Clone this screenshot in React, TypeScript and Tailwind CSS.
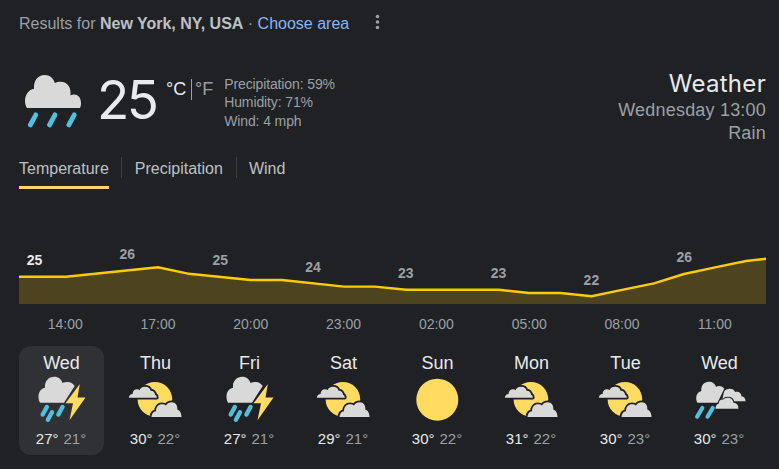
import type { ReactNode } from "react";

type IconName = "storm" | "partly" | "sunny" | "showers";

const days: { name: string; icon: IconName; high: number; low: number }[] = [
  { name: "Wed", icon: "storm", high: 27, low: 21 },
  { name: "Thu", icon: "partly", high: 30, low: 22 },
  { name: "Fri", icon: "storm", high: 27, low: 21 },
  { name: "Sat", icon: "partly", high: 29, low: 21 },
  { name: "Sun", icon: "sunny", high: 30, low: 22 },
  { name: "Mon", icon: "partly", high: 31, low: 22 },
  { name: "Tue", icon: "partly", high: 30, low: 23 },
  { name: "Wed", icon: "showers", high: 30, low: 23 },
];

const line =
  "0,36.8 47,36.8 139,27.3 170,33.8 231.5,40 263,40 325,46.6 356,46.6 387,49.8 480,49.8 510,53 541.5,53 572.5,56.2 603,49.8 635,43.4 665,34 696,27.3 727,21 747,18.8";

const temps = [
  { x: 15.5, y: 25, value: 25 },
  { x: 108.3, y: 19, value: 26 },
  { x: 201.2, y: 25, value: 25 },
  { x: 294, y: 32, value: 24 },
  { x: 386.8, y: 38, value: 23 },
  { x: 479.6, y: 38, value: 23 },
  { x: 572.4, y: 45, value: 22 },
  { x: 665.2, y: 22, value: 26 },
];

const hours = ["14:00", "17:00", "20:00", "23:00", "02:00", "05:00", "08:00", "11:00"];

function RainIcon() {
  return (
    <svg width="64" height="64" viewBox="0 0 64 64">
      <path
        d="M6 38 C4.7 36 4 33.500 4 31 C4 24.500 8 19.500 13 18.700 C12.500 10.500 17 5 23.500 5 C29 5 32.500 8.500 33.800 13 C35.500 12 37.500 11.700 39.500 11.700 C45.500 11.700 49.500 16 49.500 22 L49.500 25.400 C50.500 24.700 52 24.400 53.300 24.400 C57.500 24.400 60 28 60 33 C60 35 59.700 36.500 59 38 Z"
        fill="#d9d9d9"
      />
      <g stroke="#4fc0de" strokeWidth="4.800" strokeLinecap="round">
        <path d="M14.800 44.800 9.300 55" />
        <path d="M34 44.800 28.500 55" />
        <path d="M53.300 44.800 47.800 55" />
      </g>
    </svg>
  );
}

const icons: Record<IconName, ReactNode> = {
  storm: (
    <>
      <path
        d="M9 26.700 C8 25 7.500 23 7.500 20.800 C7.500 16 10 12.700 14 11.800 C13.300 5.500 17.500 .8 23.200 .8 C27.500 .8 30.500 3.500 31.500 7 C33 6.300 35 6 36.800 6 C40 6 42.300 7.700 43.700 10 L33 26.700 Z"
        fill="#d9d9d9"
      />
      <path d="M48.800 8 34.500 27.300H42L38.500 44.300 54.500 21.500H46.500Z" fill="#ffdc60" />
      <g stroke="#4fc0de" strokeWidth="4.400" strokeLinecap="round">
        <path d="M15.800 31 11.700 38.500" />
        <path d="M21 36.300 16.900 43.800" />
        <path d="M31.500 31 27.400 38.500" />
      </g>
    </>
  ),
  partly: (
    <>
      <circle cx="29.900" cy="23.300" r="17.300" fill="#ffdc60" />
      <path
        d="M3.800 21.700 C4.300 19 5.800 18 7.600 18 C7.600 15 9.400 13.200 12 13.200 C13 13.200 14 13.500 14.700 14 C15.600 11.800 17.500 10.700 20 10.700 C23 10.700 25 12.200 25.600 14.700 C28 14.300 30 16.500 30 18.700 C31.300 19 31.800 20.200 31.800 21.700 Z"
        fill="#d9d9d9"
        stroke="#202124"
        strokeWidth="3.600"
        strokeLinejoin="round"
        paintOrder="stroke"
      />
      <path
        d="M26.500 41 C26.500 38 28 35.500 31 35.200 C31 31 33.500 28.300 37 28.300 C38.800 28.300 40 28.600 41 29.500 C42.300 27.300 44.300 26.300 46.700 26.300 C50.500 26.300 52.800 29.500 52.300 33.500 C55 34.300 56.500 37.500 56.500 41 Z"
        fill="#d9d9d9"
        stroke="#202124"
        strokeWidth="3.600"
        strokeLinejoin="round"
        paintOrder="stroke"
      />
    </>
  ),
  sunny: <circle cx="30.300" cy="23.700" r="21" fill="#ffdc60" />,
  showers: (
    <>
      <path
        d="M33 25.300 L35 15.500 C36.200 13.700 38.300 12.700 40.700 12.700 C43.300 12.700 45.300 13.900 46.200 16 C49.500 14.800 52.300 16.800 52.500 20.200 C55 20.400 56.600 22.300 56.500 25.300 Z"
        fill="#d9d9d9"
      />
      <path
        d="M8.500 26.700 C7.600 25.500 7.200 24 7.200 22 C7.200 18.500 9 15.800 12.300 15 C11.800 9.500 15 5.700 19.800 5.700 C23.500 5.700 26.200 7.800 27 10.800 C30 9.200 33.500 10 35.300 12.500 L28.500 26.700 Z"
        fill="#d9d9d9"
        stroke="#202124"
        strokeWidth="1.800"
        paintOrder="stroke"
      />
      <path
        d="M26.500 32.700 C26.500 30 27.800 28 29.800 27.500 C29.800 24.800 31.700 23.200 34.300 23.600 C35.200 22.400 36.800 21.700 38.800 21.700 C42 21.700 44.200 23.700 44.400 26.700 C47.500 26.700 49.600 29 49.400 32.700 Z"
        fill="#d9d9d9"
        stroke="#202124"
        strokeWidth="2"
        strokeLinejoin="round"
        paintOrder="stroke"
      />
      <g stroke="#4fc0de" strokeWidth="4.200" strokeLinecap="round">
        <path d="M13.300 32 8.100 40.800" />
        <path d="M23.700 32 18.500 40.800" />
      </g>
    </>
  ),
};

export default function App() {
  return (
    <main className="h-[469px] w-[779px] overflow-hidden bg-[#202124] pl-[19px] pr-[13px] pt-3 font-['Liberation_Sans',Arial,sans-serif] text-[#bdc1c6]">
      <header className="flex h-[23px] items-center text-base">
        <p className="whitespace-pre">
          <span className="text-[#9aa0a6]">Results for </span>
          <b>New York, NY, USA</b>
          <span className="text-[#9aa0a6]"> · </span>
          <span className="text-[#8ab4f8]">Choose area</span>
        </p>
        <svg className="ml-[26px] -mt-[3px]" width="5" height="16" fill="#9aa0a6">
          <circle cx="2.500" cy="2.500" r="1.800" />
          <circle cx="2.500" cy="8" r="1.800" />
          <circle cx="2.500" cy="13.500" r="1.800" />
        </svg>
      </header>

      <section className="mt-[35px] flex h-[78px]">
        <div className="ml-[2px] w-16">
          <RainIcon />
        </div>
        <div className="ml-[12px] w-[69px] font-[Inter] text-[53px] leading-[61px] tracking-[-2.5px] text-[#e8eaed]">25</div>
        <div className="mt-[9px] flex h-[21px] text-lg leading-[21px]">
          <span className="w-[25px] text-[#e8eaed]">°C</span>
          <span className="border-l border-[#9aa0a6] pl-[3px] text-[#9aa0a6]">°F</span>
        </div>
        <div className="ml-[11px] mt-[5px] text-sm leading-[18.3px] tracking-[-0.12px] text-[#9aa0a6]">
          <p>Precipitation: 59%</p>
          <p>Humidity: 71%</p>
          <p>Wind: 4 mph</p>
        </div>
        <div className="ml-auto text-right text-lg leading-[23px] tracking-[0.2px] text-[#9aa0a6]">
          <h1 className="h-[29px] font-[Inter] text-2xl leading-7 tracking-[0.3px] text-[#e8eaed]">Weather</h1>
          <p>Wednesday 13:00</p>
          <p>Rain</p>
        </div>
      </section>

      <nav className="mt-[9px] flex h-8 text-base leading-[23px]">
        <span className="border-b-[3px] border-[#fdd663]">Temperature</span>
        <span className="ml-3 h-[21px] border-l border-[#3c4043] pl-[13px]">Precipitation</span>
        <span className="ml-[13px] h-[21px] border-l border-[#3c4043] pl-3">Wind</span>
      </nav>

      <svg className="mt-[51px] block" width="747" height="96" viewBox="0 0 747 96">
        <polygon points={`0,64 ${line} 747,64`} fill="#4d431e" />
        <polyline points={line} fill="none" stroke="#fc0" strokeWidth="2.400" />
        <g textAnchor="middle" fontSize="14" fill="#9aa0a6">
          {temps.map((t, i) => (
            <text key={t.x} x={t.x} y={t.y} fontWeight="bold" fill={i === 0 ? "#e8eaed" : "#9aa0a6"}>
              {t.value}
            </text>
          ))}
          {hours.map((hour, i) => (
            <text key={hour} x={46.2 + i * 92.8} y="89">
              {hour}
            </text>
          ))}
        </g>
      </svg>

      <section className="mt-[10px] flex gap-[9px]">
        {days.map((day, i) => (
          <div
            key={i}
            className={`flex h-[109px] w-[85px] shrink-0 flex-col items-center rounded-xl ${i === 0 ? "bg-[#303134]" : ""}`}
          >
            <div className="mt-[5px] h-[25px] text-lg leading-6 text-[#e8eaed]">{day.name}</div>
            <svg className="mr-px" width="60" height="48" viewBox="0 0 60 48">
              {icons[day.icon]}
            </svg>
            <div className="mr-px mt-[5px] flex gap-[5px] text-[15px] leading-5">
              <span className="text-[#e8eaed]">{day.high}°</span>
              <span className="text-[#9aa0a6]">{day.low}°</span>
            </div>
          </div>
        ))}
      </section>
    </main>
  );
}
